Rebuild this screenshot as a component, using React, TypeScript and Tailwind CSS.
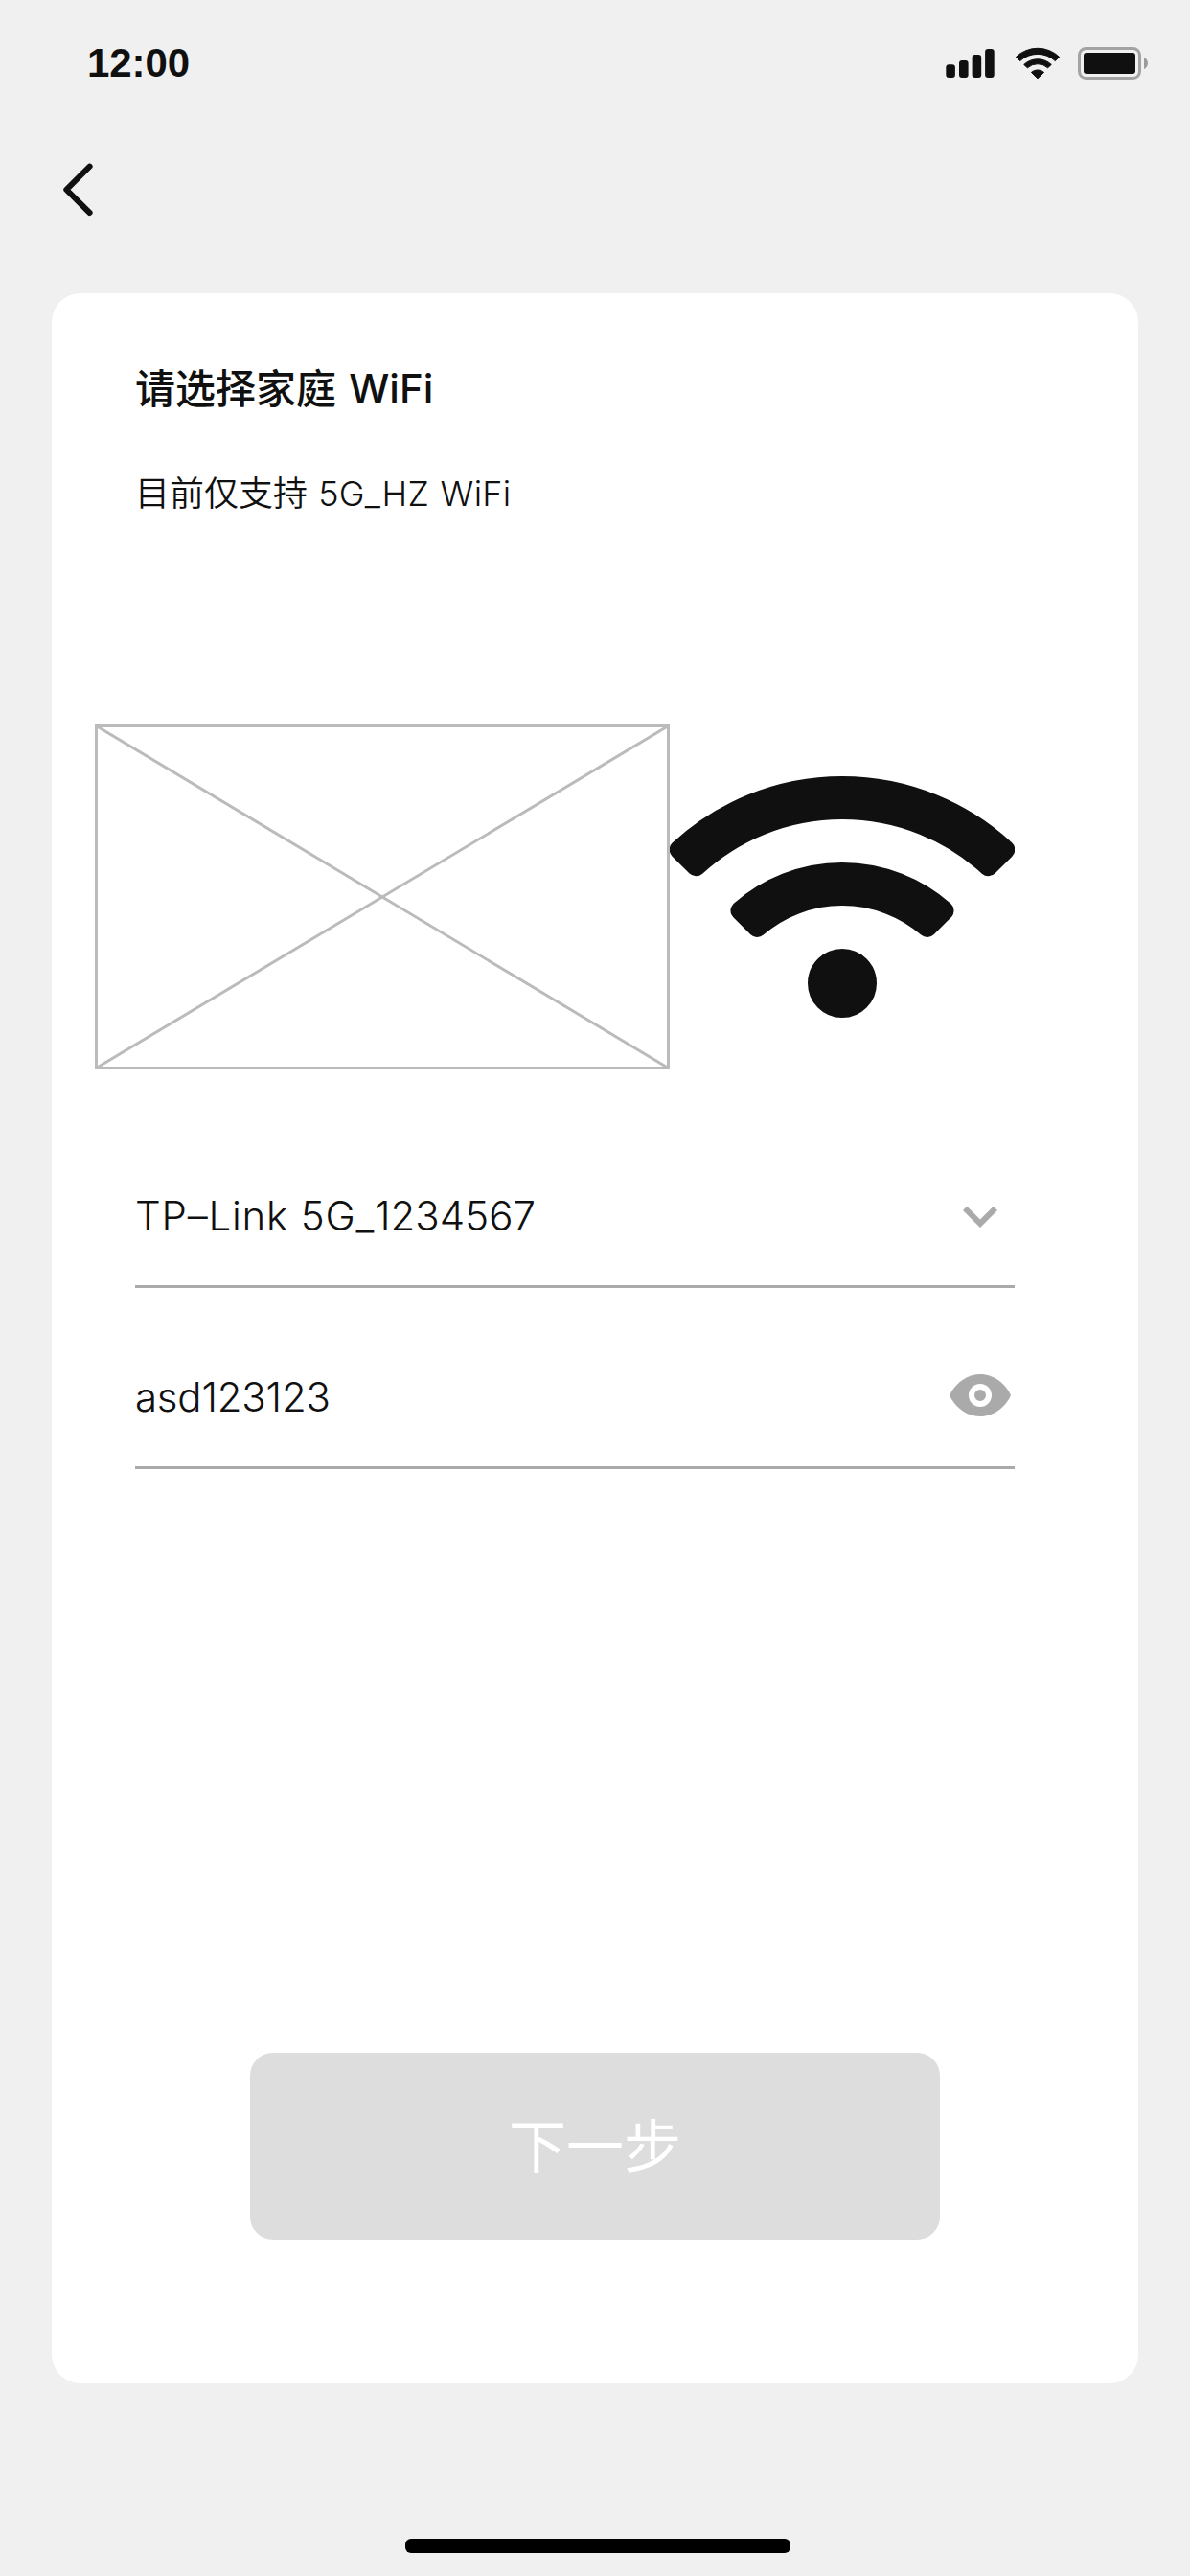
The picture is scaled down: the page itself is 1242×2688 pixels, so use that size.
import React from "react";

function StatusBar() {
  return (
    <header className="flex h-[132px] items-center justify-between pl-[91px] pr-[44px] text-[#101010]">
      <span className="font-['Liberation_Sans',sans-serif] text-[42px] font-bold leading-[48px] tracking-[-0.1px]">12:00</span>
      <div className="flex items-center">
        <svg width="51" height="36" viewBox="987 48 51 36" fill="#101010" className="mr-[22px]">
          <rect x="987.3" y="67.2" width="9.6" height="13.8" rx="3" />
          <rect x="1001" y="63" width="9.6" height="18" rx="3" />
          <rect x="1014.6" y="57" width="9.6" height="24" rx="3" />
          <rect x="1028.1" y="51" width="9.6" height="30" rx="3" />
        </svg>
        <svg width="46" height="36" viewBox="1060 48 46 36" fill="#101010" stroke="#101010" strokeWidth="1" strokeLinejoin="round" className="mr-[19px]">
          <path d="M1060.4 59.4A32.6 32.6 0 0 1 1105.6 59.4L1101.3 63.6A26.8 26.8 0 0 0 1064.7 63.6Z" />
          <path d="M1068.7 67.4A21 21 0 0 1 1097.3 67.4L1093.6 70.8A15.8 15.8 0 0 0 1072.4 70.8Z" />
          <path d="M1076.4 75.4A10 10 0 0 1 1089.6 75.4L1083 81.8Z" />
        </svg>
        <svg width="73" height="36" viewBox="1125 48 73 36">
          <rect x="1126.5" y="50.5" width="63" height="31" rx="7" fill="none" stroke="#a3a3a3" strokeWidth="3" />
          <rect x="1131" y="55" width="54" height="22" rx="3" fill="#101010" />
          <path d="M1194 60Q1198 62 1198 66T1194 72Z" fill="#9b9b9b" />
        </svg>
      </div>
    </header>
  );
}

function PlaceholderImage() {
  return (
    <svg width="600" height="360" viewBox="0 0 600 360" fill="none" stroke="#bbbbbb" strokeWidth="3">
      <rect x="1.5" y="1.5" width="597" height="357" />
      <path d="M1.5 1.5L598.5 358.5M598.5 1.5L1.5 358.5" />
    </svg>
  );
}

function WifiIcon() {
  return (
    <svg width="360" height="360" viewBox="0 0 360 360" fill="#101010" stroke="#101010" strokeWidth="20" strokeLinejoin="round">
      <path d="M9.73 130.59A251 251 0 0 1 350.27 130.59L332.6 148.3A226 226 0 0 0 27.4 148.3Z" />
      <path d="M73.45 194.3A161 161 0 0 1 286.55 194.3L268.8 212.04A136 136 0 0 0 91.2 212.04Z" />
      <circle cx="180" cy="270" r="26" />
    </svg>
  );
}

function ChevronDown() {
  return (
    <svg width="72" height="72" viewBox="0 0 24 24" fill="#aaaaaa">
      <path d="M16.59 8.59L12 13.17 7.41 8.59 6 10l6 6 6-6z" />
    </svg>
  );
}

function EyeIcon() {
  return (
    <svg width="72" height="72" viewBox="0 0 72 72" fill="#aaaaaa">
      <path d="M36 12C21.5 12 9.5 22 4 34C9.5 46 21.5 56 36 56S62.5 46 68 34C62.5 22 50.5 12 36 12Z" />
      <circle cx="36" cy="34" r="9" stroke="#ffffff" strokeWidth="6" />
    </svg>
  );
}

function Field({ children, icon }: { children: React.ReactNode; icon: React.ReactNode }) {
  return (
    <div className="flex h-[189px] items-end border-b-[3px] border-[#aaaaaa] pb-9">
      <p className="flex-1 text-[42px] font-light leading-[72px]">{children}</p>
      {icon}
    </div>
  );
}

export default function App() {
  return (
    <div className="flex h-[2688px] w-[1242px] flex-col bg-[#f0f0f0] font-['Inter','Noto_Sans_CJK_SC',sans-serif] text-[#101010]">
      <StatusBar />
      <nav className="flex h-[132px] items-center pl-[63px]">
        <button aria-label="返回">
          <svg width="36" height="60" viewBox="63 168 36 60" fill="none" stroke="#101010" strokeWidth="6" strokeLinecap="round" strokeLinejoin="round">
            <path d="M93.6 173.7L69.3 197.8L93.6 222" />
          </svg>
        </button>
      </nav>
      <main className="mx-[54px] mt-[42px] flex h-[2181px] flex-col rounded-[30px] bg-white">
        <h1 className="ml-[87px] mt-[70px] text-[42px] font-medium leading-[60px] [word-spacing:2px]">请选择家庭 WiFi</h1>
        <p className="ml-[87px] mt-[52px] text-[36px] font-[350] leading-[54px] [word-spacing:1px]">
          目前仅支持 <span className="tracking-[0.3px]">5G_HZ WiFi</span>
        </p>
        <div className="ml-[45px] mt-[214px] flex">
          <PlaceholderImage />
          <WifiIcon />
        </div>
        <section className="ml-[87px] mt-[39px] w-[918px]">
          <Field icon={<ChevronDown />}>
            <span className="tracking-[0.8px]">TP–Link 5G_</span>
            <span>1234567</span>
          </Field>
          <Field icon={<EyeIcon />}>
            <span className="tracking-[-0.2px]">asd123123</span>
          </Field>
        </section>
        <button className="mb-[150px] mt-auto h-[195px] w-[720px] self-center rounded-3xl bg-[#dddddd] text-[60px] text-white">下一步</button>
      </main>
      <div className="mb-6 ml-[423px] mt-auto h-[15px] w-[402px] rounded-md bg-black" />
    </div>
  );
}
